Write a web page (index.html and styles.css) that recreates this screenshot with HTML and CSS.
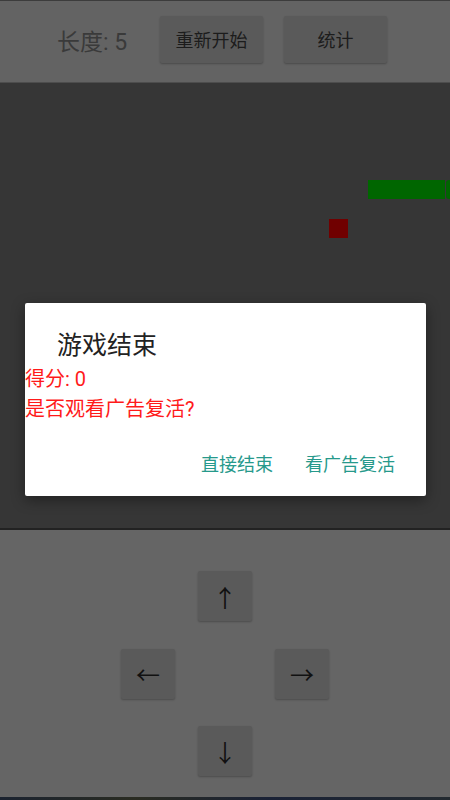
FILE: index.html
```html
<!DOCTYPE html>
<html lang="zh-CN">
<head>
<meta charset="utf-8">
<title>贪吃蛇</title>
<link rel="stylesheet" href="styles.css">
</head>
<body>
<div class="screen">
  <div class="topline"></div>
  <header class="toolbar">
    <span class="length">长度: 5</span>
    <button class="tbtn restart">重新开始</button>
    <button class="tbtn stats">统计</button>
  </header>
  <main class="board">
    <div class="snake-body"></div>
    <div class="snake-head"></div>
    <div class="food"></div>
  </main>
  <div class="divider"></div>
  <section class="controls">
    <div class="pad">
      <button class="key key-up">↑</button>
      <button class="key key-left">←</button>
      <button class="key key-right">→</button>
      <button class="key key-down">↓</button>
    </div>
  </section>
  <div class="wallpaper"></div>

  <div class="dialog">
    <h2 class="dlg-title">游戏结束</h2>
    <p class="dlg-msg">得分: 0</p>
    <p class="dlg-msg">是否观看广告复活?</p>
    <div class="dlg-actions">
      <span class="dlg-btn">直接结束</span>
      <span class="dlg-btn">看广告复活</span>
    </div>
  </div>
</div>
</body>
</html>
```

FILE: styles.css
```css
* { box-sizing: border-box; }
html, body { margin: 0; padding: 0; }
body {
  width: 450px;
  height: 800px;
  overflow: hidden;
  font-family: Roboto, "Noto Sans CJK SC", sans-serif;
  background: #333;
}
.screen {
  position: relative;
  width: 450px;
  height: 800px;
  display: flex;
  flex-direction: column;
}
.topline { height: 1px; background: #3c3c3c; }
.toolbar {
  height: 82px;
  background: #636363;
  border-bottom: 1px solid #4d4d4d;
  display: flex;
  align-items: center;
  padding-left: 57px;
}
.length {
  font-size: 23px;
  color: #3a3a3a;
  width: 103px;
  margin-top: -4px;
}
.tbtn {
  width: 103px;
  height: 47px;
  border: none;
  border-radius: 2px;
  background: #5a5a5a;
  box-shadow: 0 1px 2px rgba(0,0,0,0.25);
  font-family: Roboto, "Noto Sans CJK SC", sans-serif;
  font-size: 18px;
  color: #1c1c1c;
  padding: 0;
  margin-top: -5px;
}
.stats { margin-left: 21px; }
.board {
  position: relative;
  height: 445px;
  background: #363636;
  overflow: hidden;
}
.snake-body {
  position: absolute;
  left: 368px;
  top: 97px;
  width: 77px;
  height: 19px;
  background: #006600;
}
.snake-head {
  position: absolute;
  left: 446px;
  top: 97px;
  width: 19px;
  height: 19px;
  border-radius: 3px;
  background: #006600;
}
.food {
  position: absolute;
  left: 329px;
  top: 136px;
  width: 19px;
  height: 19px;
  background: #700000;
}
.divider { height: 2px; background: #222; }
.controls {
  height: 267px;
  background: #656565;
  display: flex;
  justify-content: center;
  padding-top: 41px;
}
.pad {
  display: grid;
  grid-template-columns: 54px 54px 54px;
  grid-template-rows: 50px 50px 50px;
  column-gap: 23px;
  row-gap: 27.5px;
}
.key {
  border: none;
  border-radius: 2px;
  background: #5a5a5a;
  box-shadow: 0 1px 2px rgba(0,0,0,0.25);
  font-family: "Noto Sans CJK SC", sans-serif;
  font-size: 24px;
  color: #111;
  padding: 0;
  display: flex;
  align-items: center;
  justify-content: center;
}
.key-up { grid-column: 2; grid-row: 1; }
.key-left { grid-column: 1; grid-row: 2; }
.key-right { grid-column: 3; grid-row: 2; }
.key-down { grid-column: 2; grid-row: 3; }
.wallpaper {
  flex: 1;
  background: linear-gradient(90deg, #1b2330, #2a2c22 30%, #1a2236 60%, #232a30);
}
.dialog {
  position: absolute;
  left: 25px;
  top: 303px;
  width: 401px;
  height: 193px;
  background: #fff;
  border-radius: 2px;
  box-shadow: 0 4px 14px rgba(0,0,0,0.4);
  display: flex;
  flex-direction: column;
}
.dlg-title {
  margin: 0;
  padding: 25px 0 0 32px;
  font-size: 25px;
  font-weight: normal;
  line-height: 36px;
  color: #222;
}
.dlg-msg {
  margin: 0;
  font-size: 20px;
  line-height: 30px;
  color: #ff1a1a;
}
.dlg-actions {
  display: flex;
  justify-content: flex-end;
  gap: 32px;
  padding-right: 31px;
  margin-top: 29px;
}
.dlg-btn {
  font-size: 18px;
  line-height: 24px;
  color: #26998b;
}
```
